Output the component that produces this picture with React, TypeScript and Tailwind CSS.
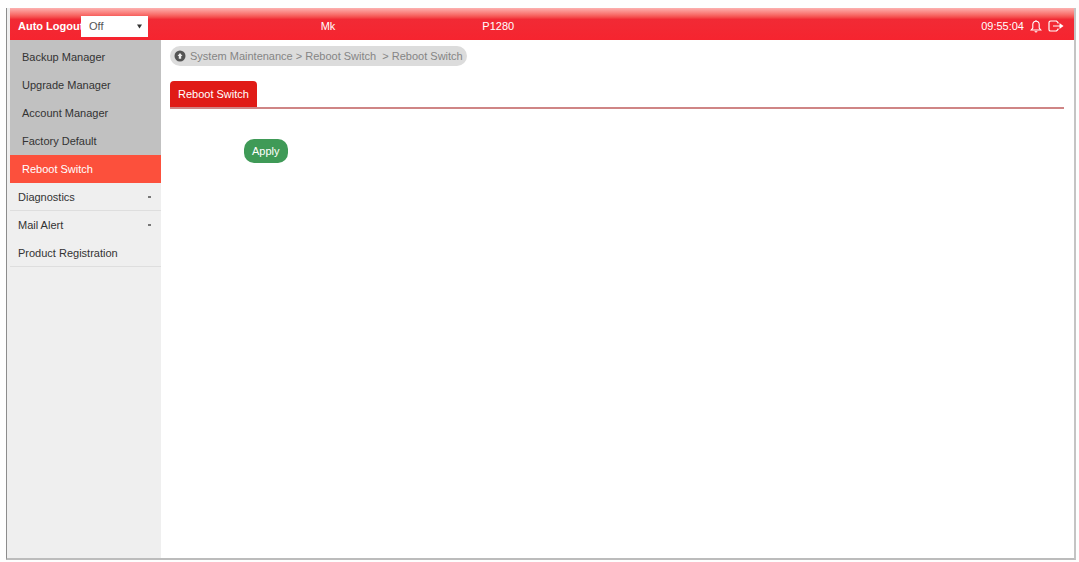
import { useState } from "react";

const subItems = [
    "Backup Manager",
    "Upgrade Manager",
    "Account Manager",
    "Factory Default",
    "Reboot Switch",
];

const menuItems = [
    { label: "Diagnostics", expandable: true, divider: true },
    { label: "Mail Alert", expandable: true, divider: false },
    { label: "Product Registration", expandable: false, divider: true },
];

function BellIcon() {
    return (
        <svg viewBox="0 0 12 14" className="w-3 h-3.5" fill="none" stroke="currentColor" strokeWidth="1.1">
            <path d="M6 1v1M1.2 11h9.6L9.2 9V5.6C9.2 3.4 8 2.2 6 2.2S2.8 3.4 2.8 5.6V9L1.2 11zM4.8 12.4c.6.7 1.8.7 2.4 0" />
        </svg>
    );
}

function LogoutIcon() {
    return (
        <svg viewBox="0 0 16 12" className="w-4 h-3" fill="none" stroke="currentColor" strokeWidth="1.2">
            <path d="M10 3.500V2.500L8.500 1H2.600C1.700 1 1 1.700 1 2.600v6.800C1 10.300 1.700 11 2.600 11H8.500L10 9.500V8.500M5 6h8" />
            <path d="M11.500 3L15.500 6l-4 3z" fill="currentColor" stroke="none" />
        </svg>
    );
}

function Header() {
    const [timeout, setTimeoutValue] = useState("Off");

    return (
        <header className="grid grid-cols-3 items-center h-8 pt-1 pr-2.5 bg-linear-to-b from-[#fbb0b0] via-[#f12a35] via-35% to-[#f6242f] text-white">
            <div className="flex items-center pr-[26px]">
                <label htmlFor="auto-logout" className="w-[71px] pl-2 font-bold whitespace-nowrap">
                    Auto Logout
                </label>
                <div className="relative">
                    <select
                        id="auto-logout"
                        value={timeout}
                        onChange={(e) => setTimeoutValue(e.target.value)}
                        className="block w-[67px] h-[21px] pl-2 appearance-none bg-white text-[#555]"
                    >
                        <option>Off</option>
                        <option>3 min</option>
                        <option>5 min</option>
                    </select>
                    <svg viewBox="0 0 6 5" className="absolute right-1.5 top-2 w-[5px] h-[5px] pointer-events-none" fill="#333">
                        <path d="M0 0h6L3 5z" />
                    </svg>
                </div>
                <span className="ml-auto">Mk</span>
            </div>
            <span className="pl-[121px]">P1280</span>
            <div className="flex items-center justify-end gap-1.5">
                <span>09:55:04</span>
                <button aria-label="Alerts"><BellIcon /></button>
                <button aria-label="Log out"><LogoutIcon /></button>
            </div>
        </header>
    );
}

function Sidebar() {
    return (
        <nav className="w-[151px] shrink-0 bg-[#efefef] text-[#333]">
            <ul className="pt-[3px] bg-[#c1c1c1]">
                {subItems.map((item) => (
                    <li key={item}>
                        <a
                            href="#"
                            className={
                                item === "Reboot Switch"
                                    ? "flex items-center h-7 pl-3 bg-[#fc503c] text-white"
                                    : "flex items-center h-7 pl-3"
                            }
                        >
                            {item}
                        </a>
                    </li>
                ))}
            </ul>
            <ul>
                {menuItems.map((item) => (
                    <li key={item.label} className={item.divider ? "border-b border-[#dedede]" : "border-b border-transparent"}>
                        <a href="#" className="flex items-center justify-between h-[27px] pl-2 pr-2.5">
                            {item.label}
                            {item.expandable && <span className="w-[3px] h-0.5 bg-[#777]" />}
                        </a>
                    </li>
                ))}
            </ul>
        </nav>
    );
}

export default function App() {
    return (
        <div className="flex min-h-screen pt-2 pl-1.5 pr-[3px] pb-0.5 bg-[#fefefe] font-['Liberation_Sans',Arial,sans-serif] text-[11px] leading-4">
            <div className="flex flex-col flex-1 border-l border-r-2 border-b-2 border-l-[#8c8c8c] border-r-[#c4c4c4] border-b-[#bcbcbc] bg-[#efefef]">
                <div className="flex flex-col flex-1 ml-[3px] bg-white">
                    <Header />
                    <div className="flex flex-1">
                        <Sidebar />
                        <main className="flex-1 pt-1.5 pl-[9px] pr-2.5">
                            <div className="inline-flex items-center gap-1 h-5 pl-1 pr-1 rounded-full bg-[#dcdcdc] text-[#858585]">
                                <svg viewBox="0 0 12 12" className="w-3 h-3" aria-hidden="true">
                                    <circle cx="6" cy="6" r="5.500" fill="#555" />
                                    <path d="M6 3l2.500 3H7.200v2.800H4.800V6H3.500z" fill="#eee" />
                                </svg>
                                <span className="whitespace-pre">{"System Maintenance > Reboot Switch  > Reboot Switch"}</span>
                            </div>
                            <div className="flex mt-[15px] border-b-2 border-[#cf8585]" role="tablist">
                                <button role="tab" aria-selected="true" className="h-[26px] px-2 rounded-t-sm bg-[#e01b16] text-white">
                                    Reboot Switch
                                </button>
                            </div>
                            <button className="mt-[30px] ml-[74px] h-6 px-2 rounded-[10px] bg-[#3f9a57] text-white">
                                Apply
                            </button>
                        </main>
                    </div>
                </div>
            </div>
        </div>
    );
}
